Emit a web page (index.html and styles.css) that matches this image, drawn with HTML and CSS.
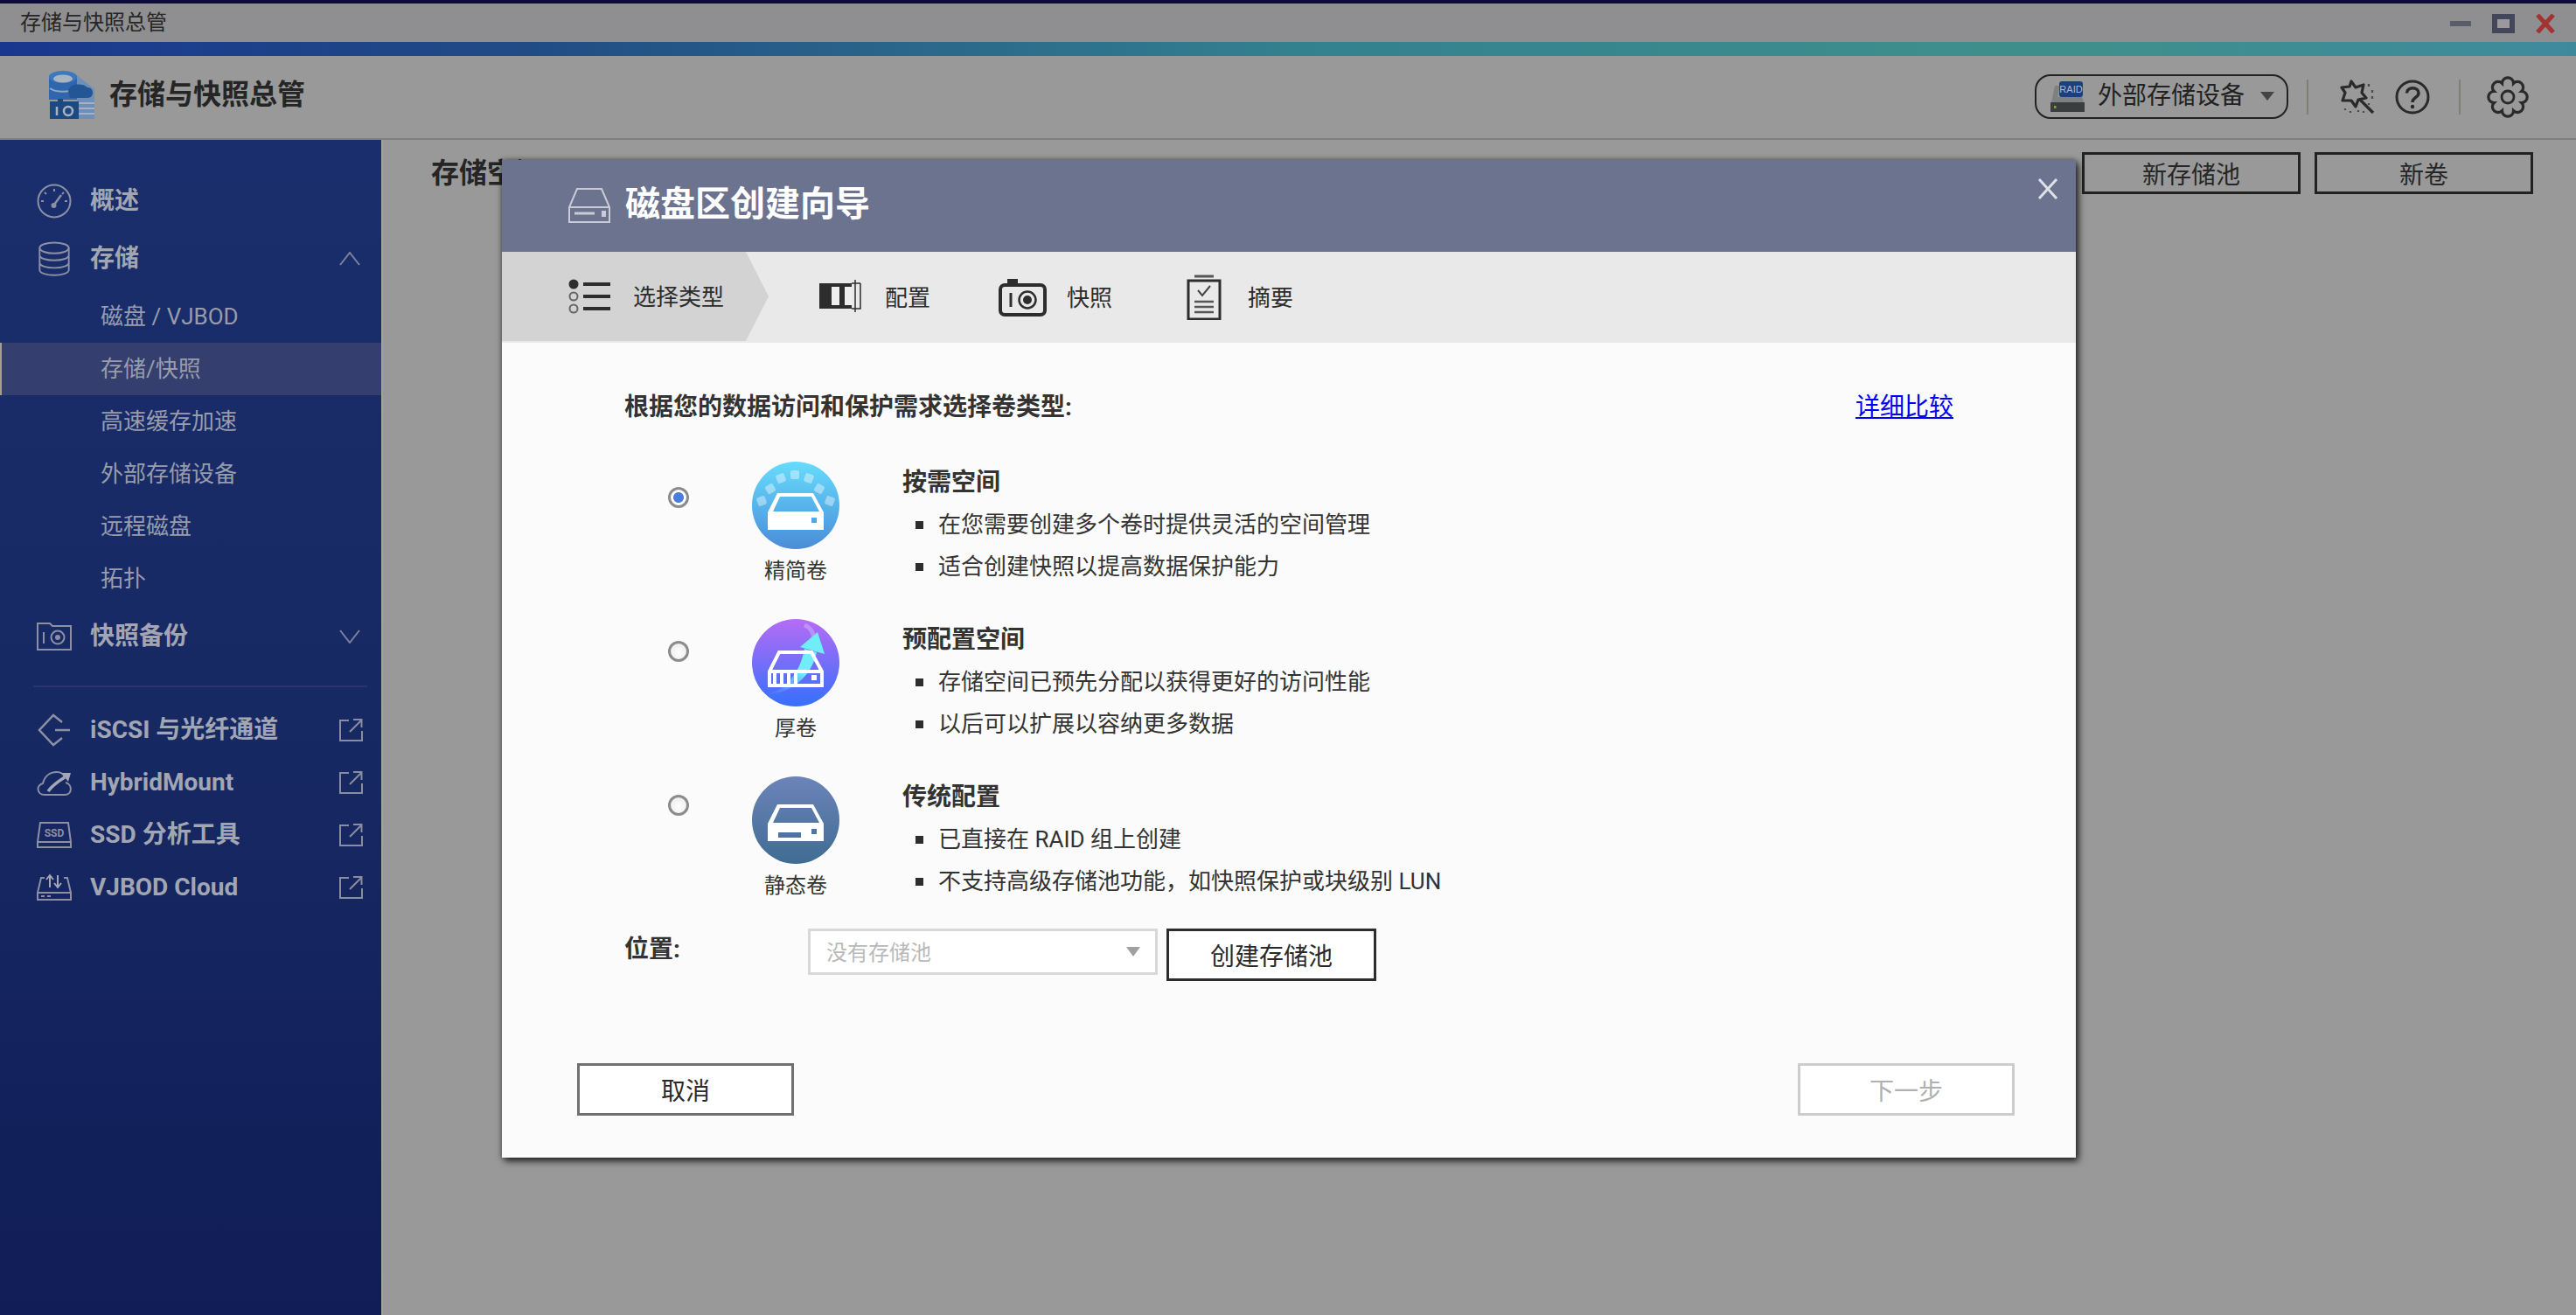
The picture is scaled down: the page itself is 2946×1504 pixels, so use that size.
FILE: index.html
```html
<!DOCTYPE html>
<html lang="zh-CN">
<head>
  <meta charset="UTF-8">
  <title>存储与快照总管</title>
  <link rel="stylesheet" href="styles.css">
</head>
<body>
  <svg class="sprite" aria-hidden="true">
    <symbol id="ext" viewBox="0 0 28 28">
      <path d="M12 3H2v23h25V15M13 16L26 3M17 2h9.500v9" fill="none" stroke="#8a8d9f" stroke-width="2"/>
    </symbol>
  </svg>

  <div class="titlebar">
    <span class="titlebar-name">存储与快照总管</span>
    <div class="win-btns">
      <span class="win-min"></span>
      <span class="win-max"></span>
      <svg class="win-close" viewBox="0 0 24 22"><path d="M3 1l18 20M21 1L3 21" stroke="#a33232" stroke-width="5" fill="none"/></svg>
    </div>
  </div>
  <div class="colorbar"></div>

  <header class="appbar">
    <svg class="logo" viewBox="0 0 54 56">
      <path d="M2 8C2 0 34 0 34 8V34H2z" fill="#2f66ad"/>
      <ellipse cx="18" cy="8" rx="16" ry="7" fill="#3b78c0"/>
      <ellipse cx="18" cy="10" rx="11" ry="4.500" fill="#a9b4c0"/>
      <path d="M3 21C10 26 26 26 33 21" stroke="#8ea6c4" stroke-width="2" fill="none"/>
      <path d="M34 6L54 22V56H34z" fill="#6d8fb9"/>
      <path d="M24 24C24 16 40 14 46 20 54 20 54 32 46 32H26z" fill="#235694"/>
      <path d="M36 38H54M36 44H54M36 50H54" stroke="#a4b2c4" stroke-width="2"/>
      <path d="M3 36H12V33H18V36H36V56H3z" fill="#1c4a80"/>
      <path d="M11 42V52" stroke="#a9b4c0" stroke-width="2.500"/>
      <circle cx="24" cy="47" r="5" stroke="#a9b4c0" stroke-width="2.500" fill="none"/>
    </svg>
    <span class="appbar-name">存储与快照总管</span>
    <div class="appbar-tools">
      <div class="pill">
        <svg class="pill-drive" viewBox="0 0 39 35">
          <path d="M5 5H32L38 24H1z" fill="#7d8182"/>
          <path d="M10 8H28L31 18H8z" fill="#8e9293"/>
          <rect x="0" y="24" width="39" height="11" fill="#3c3d3e"/>
          <rect x="4" y="28" width="2.500" height="3" fill="#79a92e"/>
          <rect x="10" y="0" width="27" height="18" rx="3" fill="#1c3f80"/>
          <text x="23.500" y="13" class="raid-text">RAID</text>
        </svg>
        <span class="pill-text">外部存储设备</span>
        <span class="pill-arrow"></span>
      </div>
      <span class="tool-sep"></span>
      <svg class="tool-wand" viewBox="0 0 40 40">
        <path d="M13 2l5 7 9-3-2 9 5 6-9 2-3 8-5-7-10 0 3-9-4-6 9-1z" fill="none" stroke="#2a2a2a" stroke-width="3.200" stroke-linejoin="round"/>
        <path d="M22 22L38 38" stroke="#2a2a2a" stroke-width="3.200"/>
        <path d="M33 5v3M37 12v3M37 19v3M33 27v2M6 33v2M12 36v2M21 35v2M27 36v2" stroke="#4a4a4a" stroke-width="2.200"/>
      </svg>
      <svg class="tool-help" viewBox="0 0 40 40">
        <circle cx="20" cy="20" r="18" fill="none" stroke="#2a2a2a" stroke-width="3"/>
        <path d="M13.500 15.500C13.500 7.500 27 8 27 15.500 27 20.500 20 20.500 20 26" fill="none" stroke="#2a2a2a" stroke-width="3.500"/>
        <circle cx="20" cy="31" r="2.200" fill="#2a2a2a"/>
      </svg>
      <span class="tool-sep tool-sep-b"></span>
      <svg class="tool-gear" viewBox="0 0 48 48">
        <path d="M30.500 8.300A6.500 6.500 0 0 1 39.700 17.500A6.500 6.500 0 0 1 39.700 30.500A6.500 6.500 0 0 1 30.500 39.700A6.500 6.500 0 0 1 17.500 39.700A6.500 6.500 0 0 1 8.300 30.500A6.500 6.500 0 0 1 8.300 17.500A6.500 6.500 0 0 1 17.500 8.300A6.500 6.500 0 0 1 30.500 8.300Z" fill="none" stroke="#2a2a2a" stroke-width="3.200"/>
        <circle cx="24" cy="24" r="7" fill="none" stroke="#2a2a2a" stroke-width="2.800"/>
      </svg>
    </div>
  </header>

  <div class="workspace">
    <nav class="sidebar">
      <div class="nav-main">
        <svg class="nav-icon" viewBox="0 0 40 40">
          <circle cx="20" cy="20" r="18.500" fill="none" stroke="#8d90a4" stroke-width="2"/>
          <path d="M20 6v3M9 10l2 2M31 10l-2 2M5 20h3M35 20h-3" stroke="#8d90a4" stroke-width="2"/>
          <path d="M28 13L20 24" stroke="#8d90a4" stroke-width="2.500"/>
          <circle cx="19.500" cy="25" r="3" fill="#8d90a4"/>
        </svg>
        <span class="nav-label">概述</span>
      </div>
      <div class="nav-main">
        <svg class="nav-icon" viewBox="0 0 40 42">
          <g fill="none" stroke="#8d90a4" stroke-width="2">
            <ellipse cx="20" cy="8" rx="17.500" ry="6.500"/>
            <path d="M2.500 8V34C2.500 43 37.500 43 37.500 34V8M2.500 16.500C2.500 25 37.500 25 37.500 16.500M2.500 25.500C2.500 34 37.500 34 37.500 25.500"/>
          </g>
        </svg>
        <span class="nav-label">存储</span>
        <svg class="nav-chev" viewBox="0 0 24 16"><path d="M1 15L12 1 23 15" fill="none" stroke="#7d819a" stroke-width="2"/></svg>
      </div>
      <ul class="subnav">
        <li>磁盘 / VJBOD</li>
        <li class="is-active">存储/快照</li>
        <li>高速缓存加速</li>
        <li>外部存储设备</li>
        <li>远程磁盘</li>
        <li>拓扑</li>
      </ul>
      <div class="nav-main">
        <svg class="nav-icon" viewBox="0 0 40 32">
          <path d="M1 31V1H15L18 4H39V31Z" fill="none" stroke="#8d90a4" stroke-width="2"/>
          <path d="M8 11V24" stroke="#8d90a4" stroke-width="2"/>
          <circle cx="24" cy="17" r="7.500" fill="none" stroke="#8d90a4" stroke-width="2"/>
          <circle cx="24" cy="17" r="3" fill="#8d90a4"/>
        </svg>
        <span class="nav-label">快照备份</span>
        <svg class="nav-chev" viewBox="0 0 24 16"><path d="M1 1L12 15 23 1" fill="none" stroke="#7d819a" stroke-width="2"/></svg>
      </div>
      <div class="nav-divider"></div>
      <div class="nav-link">
        <svg class="nav-icon" viewBox="0 0 40 36">
          <path d="M29 9L19 1 3 18 19 35 29 27M21 18H38" fill="none" stroke="#8d90a4" stroke-width="2.500"/>
        </svg>
        <span class="nav-label">iSCSI 与光纤通道</span>
        <svg class="nav-ext"><use href="#ext"/></svg>
      </div>
      <div class="nav-link">
        <svg class="nav-icon" viewBox="0 0 40 30">
          <path d="M9 29C0 29 -1 18 7 16 9 8 15 3 23 3 28 3 31 6 32 9M33 15C41 17 41 29 32 29H9" fill="none" stroke="#8d90a4" stroke-width="2"/>
          <path d="M13 25C18 18 24 14 32 9" fill="none" stroke="#a4a7b6" stroke-width="3.500"/>
          <path d="M28 4H39L36 14Z" fill="#a4a7b6"/>
        </svg>
        <span class="nav-label">HybridMount</span>
        <svg class="nav-ext"><use href="#ext"/></svg>
      </div>
      <div class="nav-link">
        <svg class="nav-icon" viewBox="0 0 40 30">
          <path d="M1 23L4 1H36L39 23M1 23H39V29H1Z" fill="none" stroke="#8d90a4" stroke-width="2"/>
          <text x="20" y="17" class="ssd-text">SSD</text>
        </svg>
        <span class="nav-label">SSD 分析工具</span>
        <svg class="nav-ext"><use href="#ext"/></svg>
      </div>
      <div class="nav-link">
        <svg class="nav-icon" viewBox="0 0 40 30">
          <path d="M1 21L5 4H9M31 4H35L39 21M1 21H39V29H1Z" fill="none" stroke="#8d90a4" stroke-width="2"/>
          <path d="M15 15V2M11 6L15 1 19 6M24 1V14M20 10L24 15 28 10" fill="none" stroke="#a4a7b6" stroke-width="2"/>
          <path d="M5 25h4M12 25h4" stroke="#8d90a4" stroke-width="2"/>
        </svg>
        <span class="nav-label">VJBOD Cloud</span>
        <svg class="nav-ext"><use href="#ext"/></svg>
      </div>
    </nav>

    <main class="content">
      <div class="toolbar">
        <span class="content-title">存储空间</span>
        <div class="toolbar-btns">
          <button class="btn-outline">新存储池</button>
          <button class="btn-outline">新卷</button>
        </div>
      </div>
    </main>
  </div>

  <section class="wizard">
    <div class="wizard-head">
      <svg class="wizard-icon" viewBox="0 0 48 40">
        <path d="M10 1H38L47 22V39H1V22ZM1 22H47" fill="none" stroke="#c9ccd6" stroke-width="2"/>
        <path d="M7 29H30" stroke="#c9ccd6" stroke-width="3"/>
        <rect x="38" y="26" width="5" height="7" fill="#c9ccd6"/>
      </svg>
      <h2 class="wizard-title">磁盘区创建向导</h2>
      <svg class="wizard-close" viewBox="0 0 24 24"><path d="M2 1L22 23M22 1L2 23" stroke="#dfe1e8" stroke-width="3" fill="none"/></svg>
    </div>

    <div class="steps">
      <div class="step step-active">
        <svg class="step-icon" viewBox="0 0 48 40">
          <circle cx="6" cy="6" r="5.500" fill="#2d2d2d"/>
          <circle cx="6" cy="20" r="4.500" fill="none" stroke="#666" stroke-width="2"/>
          <circle cx="6" cy="34" r="4.500" fill="none" stroke="#666" stroke-width="2"/>
          <path d="M17 6H48M17 20H48M17 34H48" stroke="#2d2d2d" stroke-width="4"/>
        </svg>
        <span>选择类型</span>
      </div>
      <div class="step step-config">
        <svg class="step-icon" viewBox="0 0 48 40">
          <rect x="0" y="4" width="37" height="29" fill="#2d2d2d"/>
          <rect x="14" y="8" width="9" height="21" fill="#eee"/>
          <rect x="29" y="8" width="8" height="21" fill="#eee"/>
          <path d="M47 4V33H37M37 4H47M41 0V37" fill="none" stroke="#2d2d2d" stroke-width="1.500"/>
        </svg>
        <span>配置</span>
      </div>
      <div class="step step-snap">
        <svg class="step-icon step-icon-snap" viewBox="0 0 55 44">
          <rect x="2" y="8" width="51" height="34" rx="5" fill="none" stroke="#2d2d2d" stroke-width="4"/>
          <rect x="10" y="1" width="12" height="8" fill="#2d2d2d"/>
          <path d="M14 17V33" stroke="#2d2d2d" stroke-width="3"/>
          <circle cx="33" cy="25" r="9.500" fill="none" stroke="#2d2d2d" stroke-width="2.500"/>
          <circle cx="33" cy="25" r="5" fill="#2d2d2d"/>
        </svg>
        <span>快照</span>
      </div>
      <div class="step step-summary">
        <svg class="step-icon step-icon-clip" viewBox="0 0 40 52">
          <rect x="2" y="7" width="36" height="44" fill="none" stroke="#2d2d2d" stroke-width="3"/>
          <path d="M9 2H31" stroke="#555" stroke-width="3"/>
          <path d="M13 18L18 24 27 13" fill="none" stroke="#444" stroke-width="2"/>
          <path d="M9 31H31M9 37H31M9 43H31" stroke="#555" stroke-width="2.500"/>
        </svg>
        <span>摘要</span>
      </div>
    </div>

    <div class="wizard-body">
      <div class="intro">
        <span class="intro-text">根据您的数据访问和保护需求选择卷类型:</span>
        <a class="intro-link" href="#">详细比较</a>
      </div>

      <div class="options">
        <div class="option">
          <span class="radio radio-on"></span>
          <div class="vol">
            <svg class="vol-icon" viewBox="0 0 100 100">
              <defs>
                <linearGradient id="volThin" x1="0" y1="0" x2="0" y2="1"><stop offset="0" stop-color="#66dcfc"/><stop offset="1" stop-color="#4a8cd9"/></linearGradient>
              </defs>
              <circle cx="50" cy="50" r="50" fill="url(#volThin)"/>
              <g fill="#fff" fill-opacity=".4">
                <rect x="6" y="40" width="10" height="10" rx="2" transform="rotate(-20 11 45)"/>
                <rect x="16" y="26" width="10" height="10" rx="2" transform="rotate(-30 21 31)"/>
                <rect x="28" y="14" width="10" height="10" rx="2" transform="rotate(-20 33 19)"/>
                <rect x="44" y="10" width="10" height="10" rx="2"/>
                <rect x="60" y="14" width="10" height="10" rx="2" transform="rotate(20 65 19)"/>
                <rect x="72" y="26" width="10" height="10" rx="2" transform="rotate(30 77 31)"/>
                <rect x="84" y="40" width="10" height="10" rx="2" transform="rotate(20 89 45)"/>
              </g>
              <path fill="#fff" fill-rule="evenodd" d="M29 36H70L82 58V78H18V58ZM32 40L24 57H77L68 40ZM68 64V70H74V64Z"/>
            </svg>
            <span class="vol-name">精简卷</span>
          </div>
          <div class="option-text">
            <h3>按需空间</h3>
            <p>在您需要创建多个卷时提供灵活的空间管理</p>
            <p>适合创建快照以提高数据保护能力</p>
          </div>
        </div>

        <div class="option">
          <span class="radio"></span>
          <div class="vol">
            <svg class="vol-icon" viewBox="0 0 100 100">
              <defs>
                <linearGradient id="volThick" x1="0" y1="0" x2="0" y2="1"><stop offset="0" stop-color="#b56cf5"/><stop offset="1" stop-color="#3570fb"/></linearGradient>
                <linearGradient id="volArrow" x1="0" y1="1" x2="1" y2="0"><stop offset=".1" stop-color="#6fa0fb" stop-opacity=".2"/><stop offset=".6" stop-color="#6feefa"/></linearGradient>
              </defs>
              <circle cx="50" cy="50" r="50" fill="url(#volThick)"/>
              <path d="M60 7C68 10 72 18 70 27" fill="none" stroke="#fff" stroke-opacity=".25" stroke-width="5"/>
              <path d="M16 86C38 82 55 62 60 34L74 38C68 66 44 86 16 86Z" fill="url(#volArrow)"/>
              <path d="M75 15L83 40 55 32Z" fill="#6feefa"/>
              <path fill="none" stroke="#fff" stroke-width="4" d="M31 38H68L80 60V76H20V60ZM20 60H80"/>
              <path stroke="#fff" stroke-width="4" d="M26 60V76M34 60V76M42 60V76M50 60V76"/>
              <rect x="68" y="64" width="6" height="6" fill="#fff"/>
            </svg>
            <span class="vol-name">厚卷</span>
          </div>
          <div class="option-text">
            <h3>预配置空间</h3>
            <p>存储空间已预先分配以获得更好的访问性能</p>
            <p>以后可以扩展以容纳更多数据</p>
          </div>
        </div>

        <div class="option">
          <span class="radio"></span>
          <div class="vol">
            <svg class="vol-icon" viewBox="0 0 100 100">
              <defs>
                <linearGradient id="volStatic" x1="0" y1="0" x2="0" y2="1"><stop offset="0" stop-color="#6c84b9"/><stop offset="1" stop-color="#3f6c92"/></linearGradient>
              </defs>
              <circle cx="50" cy="50" r="50" fill="url(#volStatic)"/>
              <path fill="#fff" fill-rule="evenodd" d="M29 32H70L82 54V74H18V54ZM32 36L24 53H77L68 36ZM30 64V70H56V64ZM68 60V66H74V60Z"/>
            </svg>
            <span class="vol-name">静态卷</span>
          </div>
          <div class="option-text">
            <h3>传统配置</h3>
            <p>已直接在 RAID 组上创建</p>
            <p>不支持高级存储池功能，如快照保护或块级别 LUN</p>
          </div>
        </div>
      </div>

      <div class="location">
        <span class="location-label">位置:</span>
        <div class="fake-select">
          <span class="select-text">没有存储池</span>
          <span class="select-arrow"></span>
        </div>
        <button class="btn-create">创建存储池</button>
      </div>

      <div class="wizard-foot">
        <button class="btn-cancel">取消</button>
        <button class="btn-next" disabled>下一步</button>
      </div>
    </div>
  </section>
</body>
</html>
```

FILE: styles.css
```css
* { box-sizing: border-box; }
html, body { margin: 0; height: 100%; }
body { width: 2946px; height: 1504px; overflow: hidden; background: #999; color: #333; font-family: Roboto, "Noto Sans CJK SC", sans-serif; border-top: 4px solid #0d0a3c; position: relative; }
button { font-family: inherit; cursor: pointer; }
.sprite { display: none; }

.titlebar { height: 44px; padding: 0 22px 0 23px; display: flex; align-items: center; justify-content: space-between; background: #8f8f91; }
.titlebar-name { font-size: 24px; line-height: 44px; color: #262626; }
.win-btns { display: flex; align-items: center; }
.win-min { width: 24px; height: 6px; margin: 2px 24px 0 0; background: #595c69; }
.win-max { width: 26px; height: 22px; border: 6px solid #43475a; background: #9a9a9c; margin-top: 2px; }
.win-close { width: 24px; height: 22px; margin: 2px 1px 0 23px; }
.colorbar { height: 16px; background: linear-gradient(90deg, #1a378f, #204b85 20%, #33808f 50%, #3f908c 80%, #3e8a9d); }

.appbar { height: 96px; display: flex; align-items: center; padding: 0 54px; background: #999; border-bottom: 2px solid #808080; }
.logo { width: 54px; height: 56px; margin: -6px 17px 0 0; }
.appbar-name { font-size: 32px; font-weight: 700; line-height: 44px; margin-top: -6px; color: #252525; }
.appbar-tools { margin-left: auto; display: flex; align-items: center; }
.pill { width: 290px; height: 51px; margin-top: -2px; padding: 0 17px 0 16px; display: flex; align-items: center; border: 2px solid #222; border-radius: 18px; }
.pill-drive { width: 39px; height: 35px; flex: none; }
.raid-text { font: 11px "Liberation Sans", sans-serif; fill: #aeb8cc; text-anchor: middle; }
.pill-text { margin-left: 15px; font-size: 28px; line-height: 40px; white-space: nowrap; color: #222; }
.pill-arrow { margin-left: 18px; width: 0; height: 0; border-left: 8px solid transparent; border-right: 8px solid transparent; border-top: 10px solid #444; }
.tool-sep { width: 2px; height: 40px; margin-left: 21px; background: #7f7f72; }
.tool-wand { width: 40px; height: 40px; margin-left: 36px; }
.tool-help { width: 40px; height: 40px; margin-left: 23px; }
.tool-sep-b { margin-left: 33px; }
.tool-gear { width: 48px; height: 48px; margin-left: 30px; }

.workspace { height: 1344px; display: flex; }
.sidebar { width: 438px; flex: none; padding-top: 37px; background: linear-gradient(180deg, #1a2e6d, #172963 50%, #101d56); border-right: 2px solid #a3a3a3; color: #a2a5b2; }
.nav-main { height: 66px; padding: 0 24px 0 42px; display: flex; align-items: center; }
.nav-link { height: 60px; padding: 0 21px 0 42px; display: flex; align-items: center; }
.nav-icon { width: 40px; height: 40px; flex: none; }
.nav-label { margin-left: 21px; font-size: 28px; font-weight: 700; line-height: 40px; white-space: nowrap; }
.nav-chev { width: 24px; height: 16px; margin-left: auto; }
.nav-ext { width: 28px; height: 28px; margin-left: auto; }
.subnav { margin: 0; padding: 3px 0; list-style: none; font-size: 26px; color: #989cab; }
.subnav li { height: 60px; line-height: 60px; padding-left: 115px; }
.subnav .is-active { padding-left: 113px; background: #343f70; border-left: 2px solid #a49f8b; }
.nav-divider { height: 2px; margin: 23px 16px 19px 38px; background: #29356c; }

.content { flex: 1; }
.toolbar { padding: 14px 49px 0 55px; display: flex; align-items: center; justify-content: space-between; }
.content-title { font-size: 32px; font-weight: 700; line-height: 48px; color: #252525; }
.toolbar-btns { display: flex; gap: 16px; }
.btn-outline { width: 250px; height: 48px; padding: 0; background: transparent; border: 3px solid #222; font-size: 28px; color: #262626; }

.wizard { position: absolute; left: 574px; top: 179px; width: 1800px; height: 1141px; display: flex; flex-direction: column; background: #fbfbfb; box-shadow: 3px 4px 8px rgba(0, 0, 0, .75), 0 0 6px rgba(0, 0, 0, .4); }
.wizard-head { height: 105px; flex: none; padding-left: 76px; display: flex; align-items: center; position: relative; background: #6b738e; color: #fff; }
.wizard-icon { width: 48px; height: 40px; margin-top: -2px; }
.wizard-title { margin: -4px 0 0 17px; font-size: 40px; font-weight: 700; line-height: 56px; }
.wizard-close { position: absolute; right: 20px; top: 21px; width: 24px; height: 24px; }

.steps { height: 104px; flex: none; display: flex; align-items: center; background: #e9e9e9; font-size: 26px; line-height: 40px; color: #2d2d2d; }
.step { display: flex; align-items: center; }
.step span { margin-top: 2px; }
.step-icon { width: 48px; height: 40px; flex: none; margin-right: 27px; }
.step-active { width: 305px; height: 102px; align-self: flex-start; padding-left: 76px; background: #d3d3d3; clip-path: polygon(0 0, 279px 0, 100% 50%, 279px 100%, 0 100%); }
.step-active .step-icon { margin-right: 26px; }
.step-config { margin-left: 58px; }
.step-snap { margin-left: 78px; }
.step-icon-snap { width: 55px; height: 44px; margin-right: 23px; }
.step-summary { margin-left: 85px; }
.step-icon-clip { width: 40px; height: 52px; margin-right: 30px; }

.wizard-body { flex: 1; padding-top: 54px; }
.intro { padding: 0 140px; display: flex; justify-content: space-between; font-size: 28px; line-height: 40px; }
.intro-text { font-weight: 700; }
.intro-link { color: #0000f5; }

.options { margin-top: 42px; padding-left: 190px; display: flex; flex-direction: column; gap: 36px; }
.option { height: 144px; display: flex; align-items: flex-start; }
.radio { width: 24px; height: 24px; flex: none; margin-top: 29px; border: 3px solid #8c8c8c; border-radius: 50%; background: radial-gradient(circle at 50% 60%, #fff, #e8e8e8); }
.option:nth-child(2) .radio { margin-top: 25px; }
.option:nth-child(3) .radio { margin-top: 21px; }
.radio-on { background: radial-gradient(circle, #4a7ddb 0 5.500px, #fff 6.500px); }
.vol { width: 100px; margin-left: 72px; flex: none; display: flex; flex-direction: column; align-items: center; }
.vol-icon { width: 100px; height: 100px; display: block; }
.vol-name { margin-top: 8px; font-size: 24px; line-height: 34px; white-space: nowrap; }
.option-text { margin-left: 72px; }
.option-text h3 { margin: 0; font-size: 28px; font-weight: 700; line-height: 48px; }
.option-text p { margin: 0 0 0 15px; display: flex; align-items: center; gap: 17px; font-size: 26px; line-height: 48px; }
.option-text p::before { content: ""; width: 9px; height: 9px; flex: none; background: #2d2d2d; }

.location { margin-top: 30px; padding-left: 140px; display: flex; align-items: flex-start; }
.location-label { width: 210px; font-size: 28px; font-weight: 700; line-height: 48px; }
.fake-select { width: 400px; height: 53px; padding: 0 17px 0 18px; display: flex; align-items: center; justify-content: space-between; border: 3px solid #d8d8d8; background: #fff; font-size: 24px; color: #b9b9b9; }
.select-text { margin-top: -3px; }
.select-arrow { width: 0; height: 0; border-left: 8px solid transparent; border-right: 8px solid transparent; border-top: 11px solid #a0a0a0; }
.btn-create { width: 240px; height: 60px; margin-left: 10px; padding: 0; border: 3px solid #2d2d2d; background: #fff; font-size: 28px; color: #2a2a2a; }

.wizard-foot { margin-top: 94px; padding: 0 70px 0 86px; display: flex; justify-content: space-between; }
.btn-cancel, .btn-next { width: 248px; height: 60px; padding: 0; background: #fff; font-size: 28px; }
.btn-cancel { border: 3px solid #707070; color: #2a2a2a; }
.btn-next { border: 3px solid #ccc; color: #b0b0b0; cursor: default; }
.ssd-text { font: 700 12px Roboto, sans-serif; fill: #8d90a4; text-anchor: middle; }
```
